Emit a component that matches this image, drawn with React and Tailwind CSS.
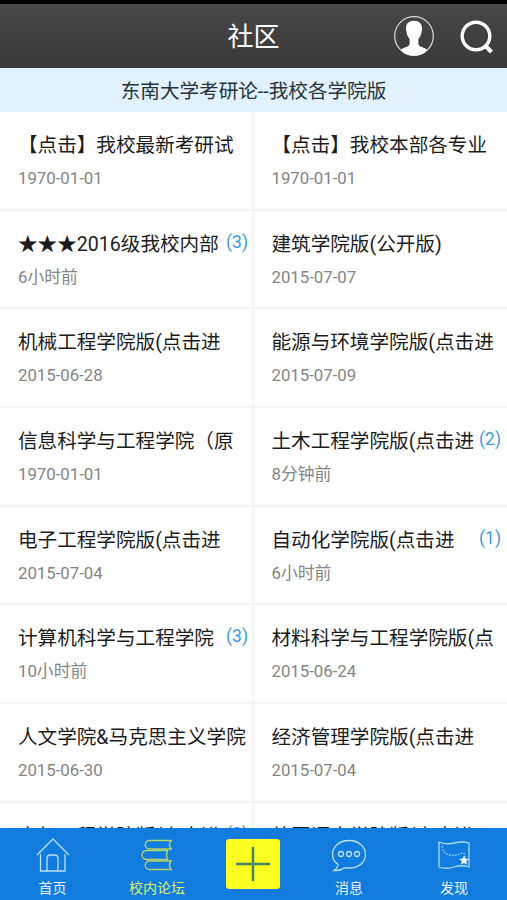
import React from "react";

const rows = [
  [
    { title: "【点击】我校最新考研试", date: "1970-01-01" },
    { title: "【点击】我校本部各专业", date: "1970-01-01" },
  ],
  [
    { title: "★★★2016级我校内部", date: "6小时前", count: 3 },
    { title: "建筑学院版(公开版)", date: "2015-07-07" },
  ],
  [
    { title: "机械工程学院版(点击进", date: "2015-06-28" },
    { title: "能源与环境学院版(点击进", date: "2015-07-09" },
  ],
  [
    { title: "信息科学与工程学院（原", date: "1970-01-01" },
    { title: "土木工程学院版(点击进", date: "8分钟前", count: 2 },
  ],
  [
    { title: "电子工程学院版(点击进", date: "2015-07-04" },
    { title: "自动化学院版(点击进", date: "6小时前", count: 1 },
  ],
  [
    { title: "计算机科学与工程学院", date: "10小时前", count: 3 },
    { title: "材料科学与工程学院版(点", date: "2015-06-24" },
  ],
  [
    { title: "人文学院&马克思主义学院", date: "2015-06-30" },
    { title: "经济管理学院版(点击进", date: "2015-07-04" },
  ],
  [
    { title: "电气工程学院版(点击进", count: 2 },
    { title: "外国语大学院版(点击进" },
  ],
];

function Header() {
  return (
    <header className="grid h-[68px] shrink-0 grid-cols-3 items-center border-t-4 border-black bg-linear-to-b from-[#484848] to-[#393939] text-white">
      <h1 className="col-start-2 pt-[2px] text-center text-[26px] leading-none">
        社区
      </h1>
      <div className="flex items-center justify-end gap-[25px] pr-[13px]">
        <svg className="size-[42px]" viewBox="0 0 42 42" fill="none">
          <circle cx="21" cy="21" r="19.3" stroke="#ddd" strokeWidth="1.2" />
          <path
            fill="#fff"
            d="M21 5.800c5.200 0 8 2.800 8 7.500 0 2-.2 2.400-.4 3.200-.5 3.600-1.700 5.700-3.200 7.300v5.200c0 3 6.600 3 9.100 6.300A19.300 19.300 0 0 1 21 40.800 19.300 19.300 0 0 1 7.500 35.300c2.500-3.300 9.100-3.300 9.100-6.300v-5.200c-1.500-1.600-2.700-3.700-3.200-7.300-.2-.8-.4-1.200-.4-3.200 0-4.700 2.800-7.500 8-7.500z"
          />
        </svg>
        <svg className="h-[35px] w-[34px]" viewBox="0 0 34 35" fill="none" stroke="#fff">
          <circle cx="16" cy="17" r="13.8" strokeWidth="3.4" />
          <path d="M24.500 26l7 7" strokeWidth="4" />
        </svg>
      </div>
    </header>
  );
}

function Topic({ topic, border }) {
  return (
    <div
      className={`relative h-full pt-[20px] ${
        border
          ? "w-[254px] border-r-2 border-[#f5f5f5] pl-[18px]"
          : "flex-1 pl-[17.5px]"
      }`}
    >
      <h2 className="whitespace-nowrap text-[19.6px] leading-[28px] text-[#1c1c1c]">
        {topic.title}
      </h2>
      <p className="mt-[5px] text-[16.8px] leading-[26px] text-[#858585]">
        {topic.date}
      </p>
      {topic.count && (
        <span
          className={`absolute top-[18px] text-[17.5px] leading-[26px] text-[#3f9be0] ${
            border ? "right-[4px]" : "right-[6px]"
          }`}
        >
          ({topic.count})
        </span>
      )}
    </div>
  );
}

function HomeIcon() {
  return (
    <svg className="h-[36px] w-[34px]" viewBox="0 0 34 36" fill="none" stroke="#b9e2ff" strokeWidth="1.3">
      <path d="M1 18L17 2l16 16M4.500 17v17h6.500V21.500q0-3.500 3.500-3.500h4q3.500 0 3.500 3.500V34h7V17M11 34h11" />
    </svg>
  );
}

function BooksIcon() {
  return (
    <svg className="h-[36px] w-[34px]" viewBox="0 0 34 36" fill="none" stroke="#b5d66b" strokeWidth="1.4">
      <path d="M32 3.500H9.500a4.200 4.200 0 0 0 0 8.500H32M31 3.500q-3 4.200 0 8.500" />
      <path d="M28 13.500H6.500a4.500 4.500 0 0 0 0 9H28M28 13.500q-3 4.500 0 9" />
      <path d="M32 24H9.500a4.200 4.200 0 0 0 0 8.500H32M31 24q-3 4.200 0 8.500" />
    </svg>
  );
}

function MessageIcon() {
  return (
    <svg className="h-[36px] w-[36px]" viewBox="0 0 36 36" fill="none" stroke="#b9e2ff" strokeWidth="1.3">
      <path d="M7 27.500C3.500 25 1.500 21.500 1.500 17.500c0-8 7-14 16.500-14s16.500 6 16.500 14-7 13.500-16.500 13.500q-2 0-4-.4Q9 34 3 33.500q4-2.500 4-6z" />
      <circle cx="10" cy="17" r="2.500" />
      <circle cx="18" cy="17" r="2.500" />
      <circle cx="26" cy="17" r="2.500" />
    </svg>
  );
}

function MapIcon() {
  return (
    <svg className="h-[36px] w-[34px]" viewBox="0 0 34 36" fill="none" stroke="#a5dcff" strokeWidth="1.3">
      <path d="M2 5q7 3 15 1t15 0v24q-7-2.500-15 0t-15 0z" />
      <path d="M5 9q1 8 8 9t11-1.500 4 5" strokeDasharray="1.500 1.500" />
      <path fill="#e8f7ff" stroke="none" d="M27 18.500l1.500 3 3.300.5-2.500 2.300.7 3.400-3-1.600-3 1.600.7-3.400-2.500-2.300 3.300-.5z" />
    </svg>
  );
}

function NavItem({ icon, label, active }) {
  return (
    <div className="flex flex-col items-center pt-[9px]">
      {icon}
      <span
        className={`mt-[5px] whitespace-nowrap text-[14px] leading-[20px] ${
          active ? "text-[#d7f36a]" : "text-[#eef8ff]"
        }`}
      >
        {label}
      </span>
    </div>
  );
}

function App() {
  return (
    <div className="flex h-[900px] w-[507px] flex-col overflow-hidden bg-white font-[Roboto,'Noto_Sans_CJK_SC',sans-serif]">
      <Header />
      <div className="flex h-[44px] shrink-0 items-center justify-center bg-[#e1f2fe] pt-[3px] text-[19.6px] text-[#26323b]">
        东南大学考研论--我校各学院版
      </div>
      <main className="min-h-0 flex-1 overflow-hidden">
        {rows.map((row, i) => (
          <div key={i} className="flex h-[98.7px] border-b-2 border-[#f5f5f5]">
            <Topic topic={row[0]} border />
            <Topic topic={row[1]} />
          </div>
        ))}
      </main>
      <nav className="grid h-[72px] shrink-0 grid-cols-[105px_104px_88px_104px_106px] bg-[#117bde]">
        <NavItem icon={<HomeIcon />} label="首页" />
        <NavItem icon={<BooksIcon />} label="校内论坛" active />
        <div className="mt-[11px] flex h-[50px] w-[54px] items-center justify-center justify-self-center rounded-[3px] bg-[#fdff20]">
          <svg className="size-[36px]" viewBox="0 0 36 36" stroke="#43875f" strokeWidth="2.5">
            <path d="M18 1v34M1 18h34" />
          </svg>
        </div>
        <NavItem icon={<MessageIcon />} label="消息" />
        <NavItem icon={<MapIcon />} label="发现" />
      </nav>
    </div>
  );
}

export default App;
